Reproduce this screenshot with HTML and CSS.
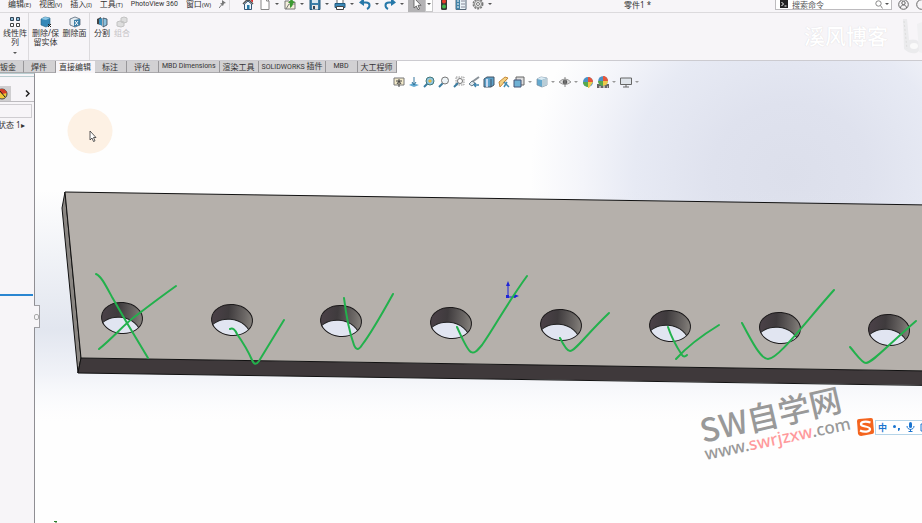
FILE: index.html
```html
<!DOCTYPE html>
<html lang="zh-CN">
<head>
    <meta charset="UTF-8">
    <meta name="viewport" content="width=device-width, initial-scale=1.0">
    <title>零件1</title>
    <link rel="stylesheet" href="styles.css">
</head>
<body>
    <header class="menubar">
        <nav class="menus">
            <button>编辑<small>(E)</small></button>
            <button>视图<small>(V)</small></button>
            <button>插入<small>(I)</small></button>
            <button>工具<small>(T)</small></button>
            <button class="latin">PhotoView 360</button>
            <button>窗口<small>(W)</small></button>
            <button aria-label="固定"><svg width="8" height="10" viewBox="0 0 8 10"><path d="M3 1l4 3-2 .5L4 7 1 4.500l2-.5z" fill="#777"/><path d="M2.500 6L0 9" stroke="#777"/></svg></button>
        </nav>
        <div class="tools">
            <button class="tool" aria-label="主页"><svg viewBox="0 0 12 12"><path d="M1 6l5-5 5 5" fill="none" stroke="#555" stroke-width="1.500"/><path d="M8.500 1h2v3z" fill="#d33" stroke="#d33"/><path d="M2.500 6L6 3l3.500 3v5.500h-7z" fill="#eef6fb" stroke="#357"/><path d="M5 7h2.500v4H5z" fill="#257aa8"/></svg></button>
            <button class="tool" aria-label="新建"><svg viewBox="0 0 12 12"><path d="M2 .5h5.500L10 3v8.500H2z" fill="#fff" stroke="#888"/><path d="M7.500.5V3H10" fill="none" stroke="#888"/></svg></button>
            <button class="drop" aria-label="新建选项"></button>
            <button class="tool" aria-label="打开"><svg viewBox="0 0 12 12"><path d="M1 3h4l1 1h5v7H1z" fill="#f4efdc" stroke="#777"/><path d="M2 11l3-5h6" fill="none" stroke="#777"/><path d="M6 10V5H4l3.500-4L11 5H9c0 2-1 4-3 5z" fill="#3c9a33"/></svg></button>
            <button class="drop" aria-label="打开选项"></button>
            <button class="tool" aria-label="保存"><svg viewBox="0 0 12 12"><path d="M1 1h10v10.500H1z" fill="#3b7ea8" stroke="#245a7d"/><path d="M3 1h6v4H3z" fill="#d9e8f1"/><path d="M3 7h6v4.500H3z" fill="#e7e7e7"/><path d="M4 8h2v3H4z" fill="#345"/></svg></button>
            <button class="drop" aria-label="保存选项"></button>
            <button class="tool" aria-label="打印"><svg viewBox="0 0 12 12"><path d="M3 1h6v5H3z" fill="#fff" stroke="#666"/><path d="M1 5.500h10v4H1z" fill="#3c88b7" stroke="#205b80"/><path d="M2.500 8.500h7v3h-7z" fill="#fff" stroke="#444"/></svg></button>
            <button class="drop" aria-label="打印选项"></button>
            <button class="tool" aria-label="撤销"><svg viewBox="0 0 12 12"><path d="M3 4.500h4c5 0 4 5 1 6.500" fill="none" stroke="#2678a9" stroke-width="2"/><path d="M0 4.500L5 0v8z" fill="#2678a9"/></svg></button>
            <button class="drop" aria-label="撤销选项"></button>
            <button class="tool" aria-label="重做"><svg viewBox="0 0 12 12"><path d="M9 4.500H5c-5 0-4 5-1 6.500" fill="none" stroke="#2678a9" stroke-width="2"/><path d="M12 4.500L7 0v8z" fill="#2678a9"/></svg></button>
            <button class="drop" aria-label="重做选项"></button>
            <button class="tool pressed" aria-label="选择"><svg viewBox="0 0 12 12"><path d="M3 0v10l2.300-2 1.700 3.700 1.500-.7L7 7.300h3z" fill="#fff" stroke="#555" stroke-width=".8"/></svg></button>
            <button class="drop framed" aria-label="选择选项"></button>
            <button class="tool" aria-label="重建模型"><svg viewBox="0 0 12 12"><rect x="3" y="0" width="6" height="12" rx="1.500" fill="#363b36"/><circle cx="6" cy="3.500" r="2" fill="#e63b28"/><circle cx="6" cy="8.500" r="2" fill="#43b648"/></svg></button>
            <button class="tool" aria-label="文件属性"><svg viewBox="0 0 12 12"><path d="M1 .5h10v11H1z" fill="#e9f2f7" stroke="#567"/><path d="M1 .5h4v11H1z" fill="#4383a8"/><path d="M2 3h2M2 6h2M2 9h2" stroke="#fff"/><path d="M6 3h4M6 6h4M6 9h4" stroke="#889"/></svg></button>
            <button class="tool" aria-label="选项"><svg viewBox="0 0 12 12"><circle cx="6" cy="6" r="4.700" fill="#ddd" stroke="#777" stroke-width="1.500" stroke-dasharray="2 1"/><circle cx="6" cy="6" r="3.500" fill="#eee" stroke="#888"/><circle cx="6" cy="6" r="1.500" fill="#fff" stroke="#777"/></svg></button>
            <button class="drop" aria-label="选项菜单"></button>
        </div>
        <h1 class="doc-title">零件1 *</h1>
        <div class="search">
            <svg width="8" height="8" viewBox="0 0 8 8"><path d="M0 0h8v8H0z" fill="#222"/><path d="M1.500 2l2 2-2 2M4.500 6h2" fill="none" stroke="#fff"/></svg>
            <input type="text" aria-label="搜索命令" placeholder="搜索命令">
            <svg width="8" height="9" viewBox="0 0 8 9"><circle cx="3.500" cy="3.500" r="2.700" fill="none" stroke="#888"/><path d="M5.500 5.500l2 3" stroke="#888"/></svg>
            <button class="drop" aria-label="搜索选项"></button>
        </div>
        <button class="account" aria-label="登录"><svg width="11" height="11" viewBox="0 0 11 11"><circle cx="5.500" cy="5.500" r="4.800" fill="none" stroke="#666"/><circle cx="5.500" cy="4" r="1.700" fill="none" stroke="#666"/><path d="M2.500 9c0-4 6-4 6 0" fill="none" stroke="#666"/></svg></button>
        <button class="account" aria-label="帮助"><svg width="11" height="11" viewBox="0 0 11 11"><circle cx="5.500" cy="5.500" r="4.800" fill="none" stroke="#666"/></svg></button>
    </header>

    <section class="ribbon">
        <div class="group">
            <button class="command narrow"><svg viewBox="0 0 12 12"><path d="M1.500 1.500h3v3h-3zM7.500 1.500h3v3h-3z" fill="#8fc0dc" stroke="#345"/><path d="M1.500 7.500h3v3h-3zM7.500 7.500h3v3h-3z" fill="#fff" stroke="#444"/></svg>线性阵列<i class="more"></i></button>
        </div>
        <div class="group">
            <button class="command"><svg viewBox="0 0 12 12"><path d="M1 3l4-2 5 1v7l-4 2-5-2z" fill="#3588b8" stroke="#246080" stroke-width=".6"/><path d="M1 3l4-2 5 1-4 2z" fill="#8dc7e4"/><path d="M8 8l3 3M11 8l-3 3" stroke="#222"/></svg>删除/保<br>留实体</button>
            <button class="command"><svg viewBox="0 0 12 12"><path d="M1 3l5-2 5 2v6l-5 2-5-2z" fill="#e6edf2" stroke="#567" stroke-width=".8"/><path d="M5 4l6-1v6l-6 2z" fill="#3a7ea7"/><path d="M6 5l3 4M9 5L6 9" stroke="#fff"/></svg>删除面</button>
        </div>
        <div class="group last">
            <button class="command small"><svg viewBox="0 0 12 12"><path d="M1 3l4-2v8l-4-1z" fill="#444"/><path d="M3 3l3-1v8l-3-2z" fill="#368fbe"/><path d="M7 2l4 1v6l-4 2z" fill="#8ac0dd" stroke="#345" stroke-width=".8"/></svg>分割</button>
            <button class="command small" disabled><svg viewBox="0 0 12 12"><path d="M5 2l3-1 3 1v4L8 7 5 6zM1 6l3-1 4 1v4l-3 1-4-1z" fill="#ddd" stroke="#c2c2c2"/></svg>组合</button>
        </div>
        <div class="blog-mark">溪风博客
            <svg width="20" height="36" viewBox="0 0 20 36"><path d="M1 0h4l2 21c8-2 11 2 11 7 0 8-10 8-16 2z" fill="#ebebed"/><path d="M2 2l3 28" stroke="#ddd" stroke-dasharray="2 2"/><ellipse cx="12" cy="27" rx="4" ry="3" fill="#fafafa"/><path d="M15 5l5-2v31l-3-1z" fill="#f0f0f2"/></svg>
        </div>
    </section>

    <main class="work">
        <svg class="scene" viewBox="0 61 922 462" preserveAspectRatio="xMinYMin slice">
            <defs>
                <radialGradient id="sky" cx="0" cy="0" r="1" gradientUnits="userSpaceOnUse" gradientTransform="translate(790 175) scale(260 240)">
                    <stop offset="0" stop-color="#dcdfeb"/>
                    <stop offset=".3" stop-color="#dfe2ee"/>
                    <stop offset=".6" stop-color="#e7eaf4"/>
                    <stop offset=".8" stop-color="#f4f5fa"/>
                    <stop offset="1" stop-color="#fefefe"/>
                </radialGradient>
                <linearGradient id="horizon" x2="0" y2="1">
                    <stop offset="0" stop-color="#e2e6ef" stop-opacity="0"/>
                    <stop offset=".6" stop-color="#e2e6ef"/>
                    <stop offset=".8" stop-color="#f1f3f8"/>
                    <stop offset="1" stop-color="#fbfbfd" stop-opacity="0"/>
                </linearGradient>
                <linearGradient id="bore">
                    <stop offset="0" stop-color="#4b4148"/>
                    <stop offset=".4" stop-color="#3f3b3d"/>
                    <stop offset=".8" stop-color="#6b6765"/>
                    <stop offset="1" stop-color="#85817c"/>
                </linearGradient>
                <clipPath id="rim"><ellipse rx="20.500" ry="15.500" transform="rotate(5)"/></clipPath>
                <g id="hole">
                    <ellipse rx="20.500" ry="15.500" transform="rotate(5)" fill="url(#bore)"/>
                    <g clip-path="url(#rim)"><ellipse cx="-2" cy="15" rx="21" ry="15.500" transform="rotate(4)" fill="#e1e5f1" stroke="#222"/></g>
                    <ellipse rx="20.500" ry="15.500" transform="rotate(5)" fill="none" stroke="#1c1a1b"/>
                </g>
            </defs>
            <rect y="61" width="922" height="462" fill="#fefefe"/>
            <rect x="480" y="61" width="442" height="320" fill="url(#sky)"/>
            <rect y="190" width="922" height="232" fill="url(#horizon)"/>

            <path d="M65 192L62 208 78 373 81 358z" fill="#8a8682" stroke="#111" stroke-linejoin="round"/>
            <path d="M65 192L922 205V371L81 358z" fill="#b5b0ab"/>
            <path d="M81 358L922 371V385L78 373z" fill="#3f393b"/>
            <path d="M930 205L65 192 81 358 930 371M81 358L78 373 930 385.500" fill="none" stroke="#111"/>

            <use href="#hole" x="122" y="318"/>
            <use href="#hole" x="232" y="320"/>
            <use href="#hole" x="341" y="321"/>
            <use href="#hole" x="451" y="323"/>
            <use href="#hole" x="561" y="325"/>
            <use href="#hole" x="670" y="326"/>
            <use href="#hole" x="780" y="328"/>
            <use href="#hole" x="889" y="330"/>

            <path d="M508 284v13h8" fill="none" stroke="#1f25d8"/>
            <path d="M508 281l-2 5h4zM519 296l-5-2v4zM506 295h3v3h-3z" fill="#1f25d8"/>

            <g class="pen">
                <path d="M96 274C101 276 105 284 112 297L127 323 148 358"/>
                <path d="M99 349C115 336 124 324 137 315 150 305 162 296 176 286"/>
                <path d="M230 329Q234 327 237 334C244 344 249 353 252 360Q255 367 259 361L284 320"/>
                <path d="M344 298C347 322 350 334 354 345Q357 353 362 345 372 332 393 294"/>
                <path d="M457 327C463 340 467 350 471 352 474 354 477 351 482 345 494 328 506 305 527 276"/>
                <path d="M560 338C564 346 568 351 570 351 575 351 585 336 609 313"/>
                <path d="M668 327C671 336 678 349 682 355Q684 358 687 355M676 359C684 350 701 336 719 325"/>
                <path d="M742 323C752 342 761 359 768 359 778 359 802 326 834 290"/>
                <path d="M850 347C857 355 862 363 866 363 872 363 887 346 916 321"/>
            </g>

            <g transform="translate(703 443) rotate(-13)">
                <text class="site-name">SW自学网</text>
            </g>
            <g transform="translate(706 460) rotate(-12)">
                <text class="site-url">www.<tspan fill="#ff9a9c">swrjzxw</tspan>.com</text>
            </g>

            <circle cx="90" cy="131" r="22.500" fill="#fdf1e4"/>
            <path d="M90 131v9l2-2 1.500 3.500 1.500-.7-1.500-3.300h2.500z" fill="#fff" stroke="#333" stroke-width=".8"/>
            <path d="M54 521.500h3M56 521v2" fill="none" stroke="#2b7a2b"/>
        </svg>

        <nav class="tabs">
            <button class="first">钣金</button>
            <button>焊件</button>
            <button class="wide active">直接编辑</button>
            <button>标注</button>
            <button>评估</button>
            <button class="wide latin">MBD Dimensions</button>
            <button class="wide">渲染工具</button>
            <button class="wide latin">SOLIDWORKS <span class="han">插件</span></button>
            <button class="latin">MBD</button>
            <button class="wide">大工程师</button>
        </nav>

        <aside class="tree">
            <div class="tree-tabs">
                <button class="appearance" aria-label="外观"><svg width="12" height="12" viewBox="0 0 12 12"><circle cx="2" cy="6" r="5" fill="#efc93a" stroke="#444"/><path d="M-2 2Q4-1 7 5L2 6z" fill="#d63b28"/><path d="M0 3l5 6" stroke="#222"/></svg></button>
                <button class="expand" aria-label="展开"><svg width="5" height="7" viewBox="0 0 5 7"><path d="M1 .5l3 3-3 3" fill="none" stroke="#222" stroke-width="1.500"/></svg></button>
            </div>
            <input class="filter" type="text" aria-label="过滤">
            <p class="state">状态 1▸</p>
            <div class="rollback"></div>
            <button class="handle" aria-label="折叠面板"></button>
        </aside>

        <div class="view-tools">
            <button class="tool" aria-label="视图设定"><svg viewBox="0 0 12 12"><path d="M1 2h10v7H1z" fill="#f2e9c9" stroke="#777"/><path d="M3 5h6M6 3v8M4 8l2-3 2 3" fill="none" stroke="#444"/></svg></button>
            <button class="tool" aria-label="正视于"><svg viewBox="0 0 12 12"><path d="M1 9l4-2 6 2-5 2z" fill="#62a9d0"/><path d="M6 1v8M4 6l2 3 2-3" fill="none" stroke="#36779d"/></svg></button>
            <button class="tool" aria-label="整屏显示"><svg viewBox="0 0 12 12"><path d="M1 11l4-4" stroke="#397b9f" stroke-width="2"/><circle cx="7" cy="5" r="4" fill="#8fc5e0" stroke="#477"/><path d="M5 5l2-2 2 2-2 2z" fill="#e6b942"/></svg></button>
            <button class="tool" aria-label="局部放大"><svg viewBox="0 0 12 12"><path d="M1 11l4-4" stroke="#397b9f" stroke-width="2"/><circle cx="7" cy="4.500" r="3.500" fill="#eef4f7" stroke="#777"/></svg></button>
            <button class="tool" aria-label="放大选取范围"><svg viewBox="0 0 12 12"><path d="M3 1h8v8H3z" fill="#eee" stroke="#999" stroke-dasharray="1.500 1"/><path d="M1 11l4-4" stroke="#397b9f" stroke-width="2"/><circle cx="7" cy="5" r="2.500" fill="#fff" stroke="#777"/></svg></button>
            <button class="tool" aria-label="上一视图"><svg viewBox="0 0 12 12"><path d="M11 1L4 6" stroke="#8a9299" stroke-width="2"/><path d="M1 8l3-3 3 2-3 3z" fill="#dde6ec" stroke="#6d7f8b"/><path d="M11 9H6M8 7L6 9l2 2" fill="none" stroke="#3f86b0" stroke-width="1.300"/></svg></button>
            <button class="tool" aria-label="剖面视图"><svg viewBox="0 0 12 12"><path d="M1 3l3-2h7v8l-3 2H1z" fill="#5ca1c9" stroke="#456"/><path d="M4 3v8" stroke="#eef" stroke-width="1.500"/><path d="M8 3v8" stroke="#456"/></svg></button>
            <button class="tool" aria-label="动态注解"><svg viewBox="0 0 12 12"><path d="M1 6l6-5 3 1-8 9zM5 7l4-4" fill="#f1d083" stroke="#c78a3a"/><path d="M6 6l5 5M6 11l3-5" stroke="#428bb1" stroke-width="1.500"/></svg></button>
            <button class="tool" aria-label="视图定向"><svg viewBox="0 0 12 12"><path d="M3 1h8v8H3z" fill="#ddd" stroke="#666"/><path d="M1 4h7v7H1z" fill="#70b2d5" stroke="#457"/></svg></button>
            <button class="drop" aria-label="定向选项"></button>
            <button class="tool" aria-label="显示样式"><svg viewBox="0 0 12 12"><path d="M1 3l4-2 6 1v7l-5 2-5-2z" fill="#65a9ce" stroke="#789" stroke-width=".7"/><path d="M1 3l4-2 6 1-5 2z" fill="#dcebf3"/><path d="M6 4l5-2v7l-5 2z" fill="#b9cdd7"/></svg></button>
            <button class="drop" aria-label="样式选项"></button>
            <button class="tool" aria-label="隐藏项目"><svg viewBox="0 0 12 12"><path d="M0 6q6-6 12 0-6 5-12 0z" fill="#ddd" stroke="#999"/><circle cx="6" cy="6" r="2.300" fill="#555"/><path d="M6 1v10" stroke="#888"/></svg></button>
            <button class="drop" aria-label="隐藏选项"></button>
            <button class="tool" aria-label="编辑外观"><svg viewBox="0 0 12 12"><circle cx="6" cy="6" r="5" fill="#4a91c4"/><path d="M6 6V1a5 5 0 0 1 5 5z" fill="#e8563a"/><path d="M1 6h5v5a5 5 0 0 1-5-5z" fill="#57a94b"/><path d="M6 6h5L7 12H6z" fill="#ecc94a"/></svg></button>
            <button class="tool" aria-label="应用布景"><svg viewBox="0 0 12 12"><path d="M0 8h12v4H0z" fill="#666"/><circle cx="6" cy="5" r="4.800" fill="#4a91c4"/><path d="M6 5V0a5 5 0 0 1 5 5z" fill="#e8563a"/><path d="M1 5h5v5a5 5 0 0 1-5-5z" fill="#57a94b"/><path d="M6 5h5a5 5 0 0 1-5 5z" fill="#ecc94a"/><path d="M2 11h2M6 11h2M10 11h1" stroke="#fff"/></svg></button>
            <button class="drop" aria-label="布景选项"></button>
            <button class="tool" aria-label="视图设置"><svg viewBox="0 0 12 12"><path d="M.5 2h11v6.500H.5z" fill="#dfe4ea" stroke="#666"/><path d="M6 8v3M3 11h6" stroke="#666"/></svg></button>
            <button class="drop" aria-label="视图选项"></button>
        </div>

        <div class="ime">
            <svg class="ime-logo" width="19" height="18" viewBox="0 0 19 18"><path d="M1 3Q1 1 3 1L15 0q2 0 2 2l1 12q0 2-2 2L5 18q-2 0-3-2z" fill="#f4641e"/><path d="M14.500 4.500C9 2.500 4.500 4 5 6.500S14 8 14 11s-6 3.500-10 1.500" fill="none" stroke="#fff" stroke-width="2.200"/></svg>
            <div class="ime-bar">
                <button>中</button>
                <button aria-label="标点"><svg width="9" height="9" viewBox="0 0 9 9"><circle cx="2.500" cy="3.500" r="1.500" fill="#1b75d0"/><path d="M6 5h2q0 3-2 3z" fill="#1b75d0"/></svg></button>
                <button aria-label="语音"><svg width="9" height="10" viewBox="0 0 9 10"><rect x="3" width="3" height="6" rx="1.500" fill="#1b75d0"/><path d="M1 4c0 4.500 7 4.500 7 0M4.500 7v3M2.500 9.500h4" fill="none" stroke="#1b75d0"/></svg></button>
                <button aria-label="键盘"><svg width="10" height="9" viewBox="0 0 10 9"><path d="M1 1h8v7H1zM3 3h4M3 6h4" fill="none" stroke="#1b75d0"/></svg></button>
            </div>
        </div>
    </main>
</body>
</html>
```
FILE: styles.css
```css
/* Basic Reset */
* {
    margin: 0;
    padding: 0;
    box-sizing: border-box;
}

body {
    display: flex;
    flex-direction: column;
    height: 100vh;
    overflow: hidden;
    font-family: "Noto Sans", "Noto Sans CJK SC", sans-serif;
    font-size: 8px;
    line-height: 9px;
    background-color: #f7f5f8;
    color: #333;
}

button,
input {
    font: inherit;
    color: inherit;
    border: none;
    background: none;
}

button {
    white-space: nowrap;
}

svg {
    display: block;
    flex: none;
}

/* Menu bar */
.menubar {
    display: flex;
    align-items: center;
    flex: none;
    height: 13px;
    padding-bottom: 4px;
    border-bottom: 1px solid #dcdadd;
}

.menus {
    display: flex;
    align-items: center;
    gap: 8px;
    width: 230px;
    height: 12px;
    padding-left: 8px;
    border-right: 1px solid #dddbde;
}

.menus small {
    font-size: 6px;
}

.latin {
    font-family: Roboto, "Noto Sans CJK SC", sans-serif;
    font-size: 7px;
}

.latin .han {
    font-size: 8px;
}

.tools {
    display: flex;
    align-items: center;
    padding-left: 9px;
}

.tool {
    display: flex;
    align-items: center;
    justify-content: center;
    width: 17px;
    height: 16px;
}

.tool svg {
    width: 12px;
    height: 12px;
}

.drop {
    display: flex;
    align-items: center;
    justify-content: center;
    width: 8px;
    height: 16px;
}

.drop::after,
.more {
    content: "";
    border: 2px solid transparent;
    border-top-color: #555;
    border-bottom: none;
}

.pressed {
    margin-left: 2px;
    background-color: #b4b3b5;
}

.framed {
    margin-right: 2px;
    border: 1px solid #c9c8ca;
    background-color: #fff;
}

.doc-title {
    flex: 1;
    padding-left: 130px;
    font-size: 8px;
    font-weight: normal;
}

.search {
    display: flex;
    align-items: center;
    gap: 4px;
    width: 117px;
    height: 12px;
    margin-right: 6px;
    padding-left: 4px;
    border: 1px solid #bdbbbe;
    background-color: #fff;
}

.search input {
    flex: 1;
    min-width: 0;
}

.search input::placeholder {
    color: #555;
}

.search .drop {
    margin-left: -4px;
}

.account {
    width: 18px;
    flex: none;
}

.account:last-child {
    width: 6px;
}

/* Ribbon */
.ribbon {
    display: flex;
    flex: none;
    height: 48px;
    border-bottom: 1px solid #cccbd0;
}

.group {
    display: flex;
    padding: 3px 0 0 2px;
    border-right: 1px solid #dcdadd;
}

.group.last {
    border: none;
}

.command {
    display: flex;
    flex-direction: column;
    align-items: center;
    width: 29px;
    text-align: center;
}

.command svg {
    width: 12px;
    height: 12px;
}

.narrow {
    width: 26px;
    white-space: normal;
}

.more {
    margin-top: 6px;
}

.small {
    width: 20px;
}

.command:disabled {
    color: #c4c2c5;
}

.blog-mark {
    display: flex;
    align-items: center;
    gap: 14px;
    margin-left: auto;
    font-size: 21px;
    font-weight: 500;
    color: #fff;
    text-shadow: 0 0 1px #d4d2d6;
}

/* Work area */
.work {
    position: relative;
    display: flex;
    flex: 1;
    flex-direction: column;
    min-height: 0;
}

.scene {
    position: absolute;
    inset: 0;
    width: 100%;
    height: 100%;
}

.pen {
    fill: none;
    stroke: #22b14c;
    stroke-width: 2px;
    stroke-linecap: round;
}

.site-name {
    font-family: "Noto Sans CJK SC", sans-serif;
    font-size: 32px;
    font-weight: 500;
    fill: #999;
}

.site-url {
    font-family: "Noto Sans", sans-serif;
    font-size: 17px;
    font-weight: 500;
    fill: #999;
}

.tabs {
    position: relative;
    display: flex;
    flex: none;
    height: 12px;
}

.tabs button {
    padding: 0 8px 0 7px;
    border-right: 1px solid #98979a;
    border-bottom: 1px solid #aaa9ac;
    background-color: #d2d1d3;
}

.tabs .wide {
    padding: 0 3px;
}

.tabs .first {
    padding: 0 7px 0 0;
}

.tabs .active {
    border-color: #f7f5f8;
    background-color: #f7f5f8;
}

/* Feature tree */
.tree {
    position: relative;
    flex: 1;
    width: 35px;
    padding-top: 2px;
    border-top: 1px solid #b9cdd0;
    border-right: 1px solid #8f8e93;
    background-color: #f7f5f8;
}

.tree-tabs {
    display: flex;
    align-items: flex-end;
    justify-content: space-between;
    height: 26px;
    padding-right: 4px;
    border-top: 1px solid #b9cdd0;
    border-bottom: 1px solid #bdbbbf;
}

.appearance {
    width: 11px;
    height: 15px;
    overflow: hidden;
    background-color: #cfced0;
}

.expand {
    height: 15px;
}

.filter {
    display: block;
    width: 32px;
    height: 14px;
    margin-top: 2px;
    border: 1px solid #cfcdd1;
    border-left: none;
}

.state {
    margin: 2px 0 0 -2px;
    white-space: nowrap;
}

.rollback {
    width: 33px;
    height: 2px;
    margin-top: 165px;
    background-color: #2a86d1;
}

.handle {
    position: absolute;
    top: 231px;
    right: -6px;
    display: flex;
    align-items: center;
    justify-content: center;
    width: 6px;
    height: 23px;
    border: 1px solid #a09fa4;
    border-left: none;
    background-color: #f7f5f8;
}

.handle::after {
    content: "";
    flex: none;
    width: 3px;
    height: 4px;
    border: 1px solid #aaa;
    border-radius: 2px;
}

/* Toolbar over the model */
.view-tools {
    position: absolute;
    top: 13px;
    left: 391px;
    display: flex;
    align-items: center;
}

.view-tools .tool {
    width: 15px;
}

.view-tools .drop::after {
    border-top-color: #999;
}

/* Input method bar */
.ime {
    position: absolute;
    top: 357px;
    right: 0;
    display: flex;
    align-items: center;
    width: 66px;
    overflow: hidden;
}

.ime-bar {
    display: flex;
    align-items: center;
    gap: 5px;
    height: 15px;
    padding-left: 2px;
    border: 1px solid #b5d4e8;
    border-right: none;
    background-color: #fff;
}

.ime-bar button {
    flex: none;
    font-size: 9px;
    font-weight: bold;
    color: #1b75d0;
}
```
